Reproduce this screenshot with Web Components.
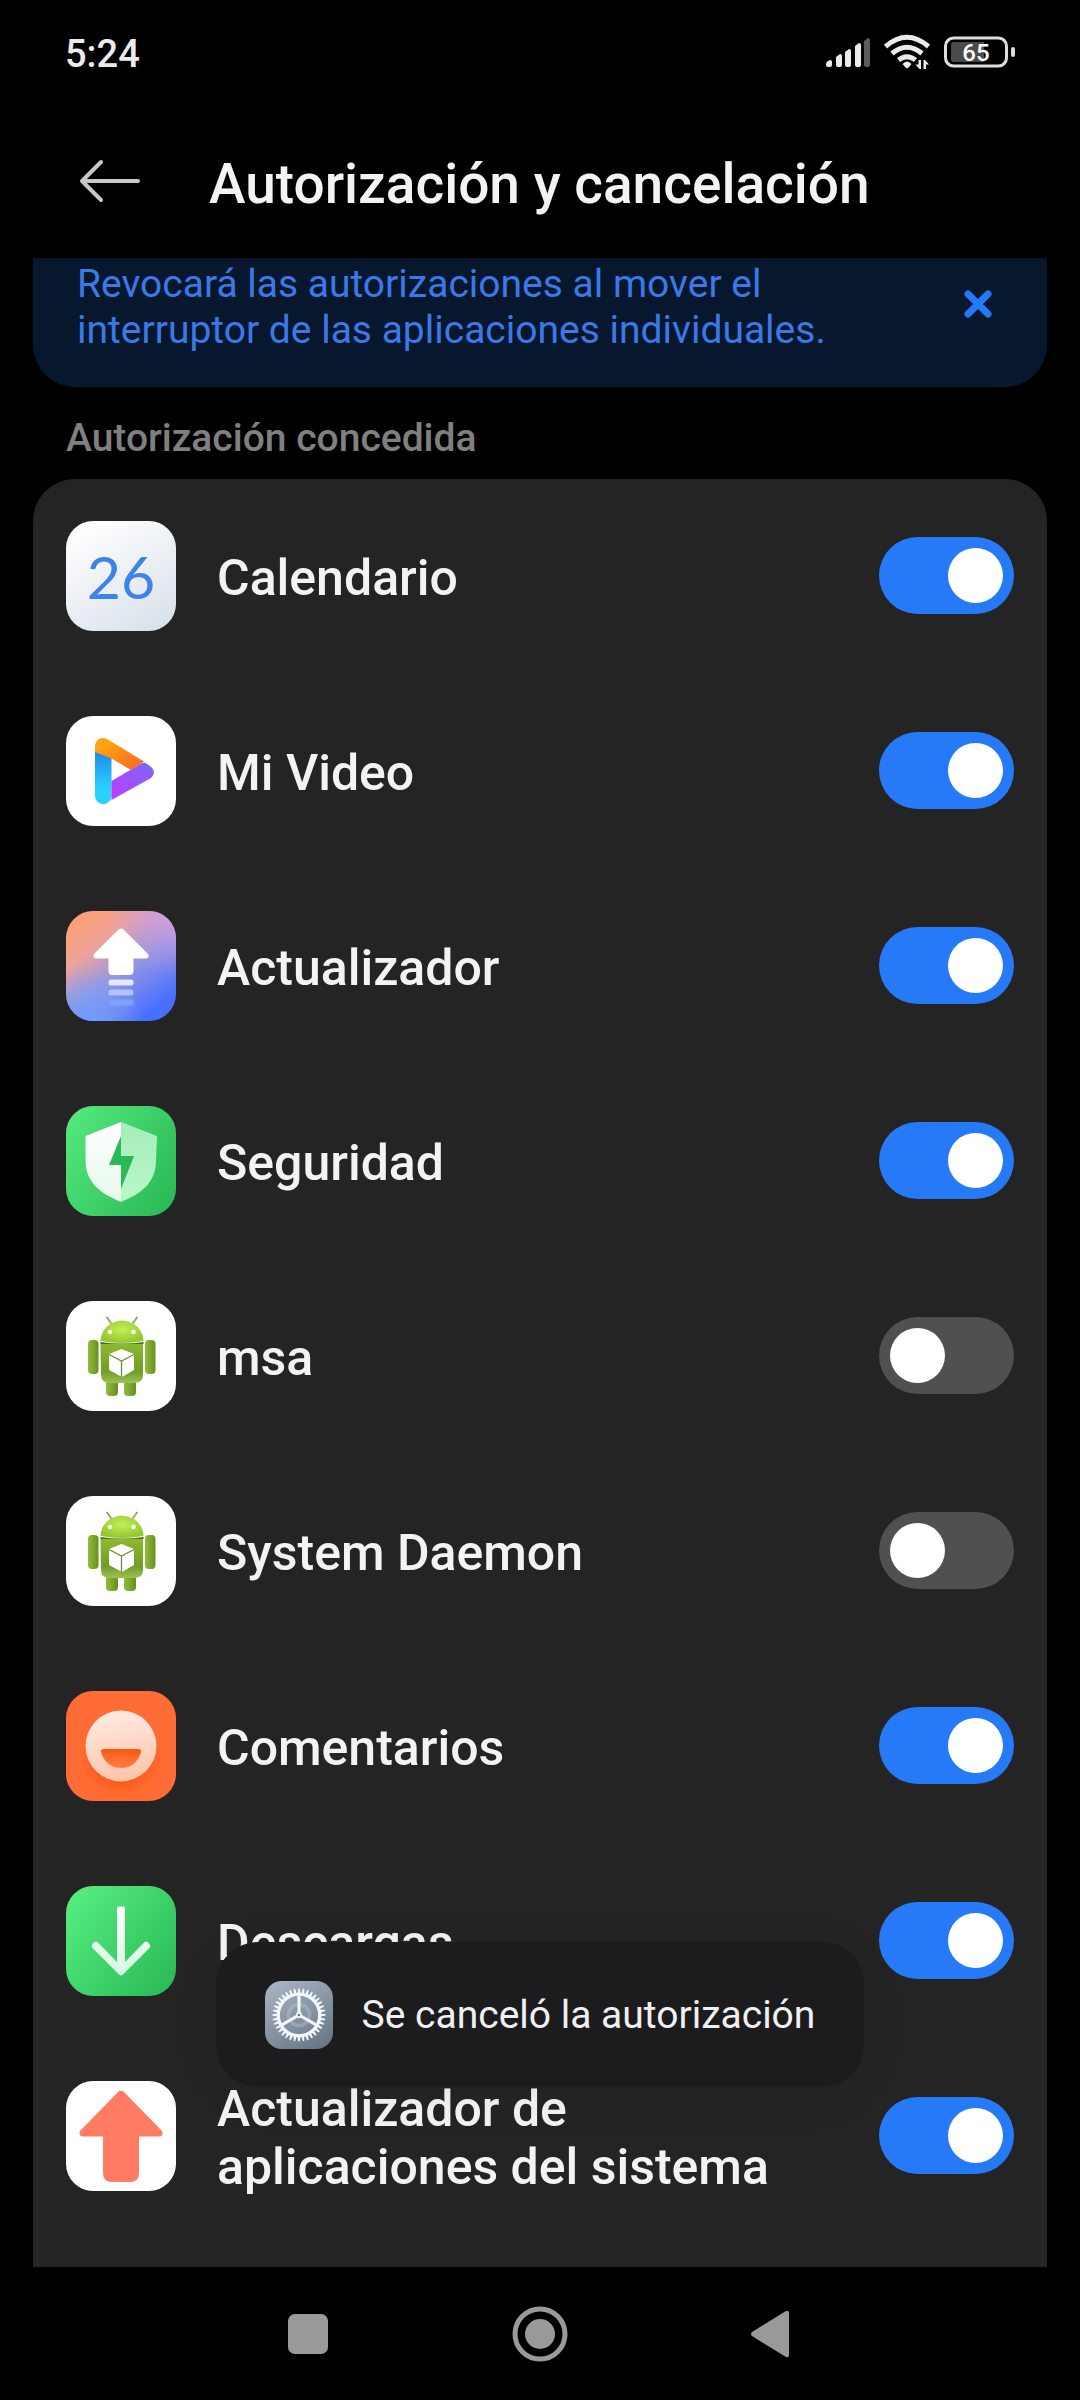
<!DOCTYPE html>
<html lang="es">
<head>
<meta charset="utf-8">
<meta name="viewport" content="width=device-width, initial-scale=1">
<title>Autorización y cancelación</title>
<style>
  html { background: #000; }
  body { margin: 0; font-family: Roboto, sans-serif; color: #f3f3f3; }
</style>
</head>
<body>
<settings-screen>
  <status-bar slot="status" time="5:24" battery="65"></status-bar>
  <title-bar slot="header">Autorización y cancelación</title-bar>
  <tip-banner>Revocará las autorizaciones al mover el interruptor de las aplicaciones individuales.</tip-banner>
  <app-group heading="Autorización concedida">
    <app-row icon="calendar" on>Calendario</app-row>
    <app-row icon="video" on>Mi Video</app-row>
    <app-row icon="updater" on>Actualizador</app-row>
    <app-row icon="security" on>Seguridad</app-row>
    <app-row icon="android">msa</app-row>
    <app-row icon="android">System Daemon</app-row>
    <app-row icon="feedback" on>Comentarios</app-row>
    <app-row icon="downloads" on>Descargas</app-row>
    <app-row icon="sysupdate" on>Actualizador de aplicaciones del sistema</app-row>
  </app-group>
  <toast-message slot="toast">Se canceló la autorización</toast-message>
  <nav-bar slot="nav"></nav-bar>
</settings-screen>

<script>
const define = (name, render) => customElements.define(name, class extends HTMLElement {
  connectedCallback() {
    if (this.shadowRoot) return;
    this.attachShadow({ mode: 'open' }).innerHTML = render(this);
  }
});

const gearTeeth = (n, cx, cy, r1, r2) => {
  let d = '';
  for (let i = 0; i < n; i++) {
    const a = (i / n) * Math.PI * 2, w = Math.PI / n;
    const p = (ang, r) => (cx + Math.sin(ang) * r).toFixed(2) + ' ' + (cy - Math.cos(ang) * r).toFixed(2);
    d += (i ? 'L' : 'M') + p(a - w * 0.7, r1) + 'L' + p(a - w * 0.3, r2) + 'L' + p(a + w * 0.3, r2) + 'L' + p(a + w * 0.7, r1);
  }
  return d + 'Z';
};

const ICONS = {
  calendar: `<defs><linearGradient id="g" x1="0.2" y1="0" x2="0.8" y2="1"><stop offset="0" stop-color="#fff"/><stop offset="1" stop-color="#d9e2ea"/></linearGradient></defs>
    <rect width="110" height="110" rx="27" fill="url(#g)"/>
    <text x="55" y="78" text-anchor="middle" font-family="Lato, sans-serif" font-size="59" fill="#3f82e8">26</text>`,
  video: `<defs><linearGradient id="o" x1="0" y1="0" x2="1" y2="1"><stop offset="0.2" stop-color="#fea312"/><stop offset="1" stop-color="#fb6422"/></linearGradient>
    <linearGradient id="b" x1="0" y1="0" x2="0" y2="1"><stop offset="0" stop-color="#1f87e8"/><stop offset="0.7" stop-color="#2bd0ff"/></linearGradient>
    <linearGradient id="p" x1="0" y1="1" x2="1" y2="0"><stop offset="0" stop-color="#c03cff"/><stop offset="1" stop-color="#7a67f8"/></linearGradient></defs>
    <rect width="110" height="110" rx="27" fill="#fff"/>
    <path d="M29 35H45.500V80A8.200 8.200 0 0 1 29 80Z" fill="url(#b)"/>
    <path d="M45.500 65L76 47Q79 46 82 48.500Q92 55 85 62L45.500 84Z" fill="url(#p)"/>
    <path d="M29 36V30Q30 22 37 22Q39 22 42 23.500L78 45.500L65 54L45.500 42.500Z" fill="url(#o)"/>`,
  updater: `<defs><linearGradient id="g" x1="0.15" y1="0" x2="0.8" y2="0.9"><stop offset="0" stop-color="#ff9f70"/><stop offset="0.3" stop-color="#eea39c"/><stop offset="0.6" stop-color="#9595e2"/><stop offset="1" stop-color="#4770ff"/></linearGradient>
    <radialGradient id="r" cx="1" cy="0" r="0.6"><stop offset="0" stop-color="#d7a0e6"/><stop offset="1" stop-color="#b49ae6" stop-opacity="0"/></radialGradient>
    <radialGradient id="l" cx="0.2" cy="1" r="0.5"><stop offset="0" stop-color="#6b9cff"/><stop offset="1" stop-color="#86a4f4" stop-opacity="0"/></radialGradient>
    <filter id="f" x="-20%" y="-60%" width="140%" height="220%"><feGaussianBlur stdDeviation="1.2"/></filter></defs>
    <rect width="110" height="110" rx="27" fill="url(#g)"/><rect width="110" height="110" rx="27" fill="url(#r)"/><rect width="110" height="110" rx="27" fill="url(#l)"/>
    <path d="M52 19Q55 16 58 19L82 43Q84 47 80 47.500H67.500V60Q67.500 64 63.500 64H46.500Q42.500 64 42.500 60V47.500H30Q26 47 28 43Z" fill="#fff"/>
    <rect x="42.500" y="68.500" width="25" height="6" rx="2.500" fill="#e3e8ff"/>
    <rect x="42.500" y="78.500" width="25" height="6" rx="2.500" fill="#b1c4ff"/>
    <rect x="42.500" y="88.500" width="25" height="6" rx="2.500" fill="#7fa3ff" filter="url(#f)"/>`,
  security: `<defs><linearGradient id="g" x1="0" y1="0.2" x2="1" y2="0.8"><stop offset="0" stop-color="#53e67b"/><stop offset="1" stop-color="#2aba57"/></linearGradient>
    <linearGradient id="w" x1="0" y1="0" x2="0" y2="1"><stop offset="0" stop-color="#fff"/><stop offset="1" stop-color="#e6f9ec"/></linearGradient>
    <linearGradient id="m" x1="0" y1="0" x2="0" y2="1"><stop offset="0" stop-color="#a6edba"/><stop offset="1" stop-color="#b9f8ca"/></linearGradient></defs>
    <rect width="110" height="110" rx="27" fill="url(#g)"/>
    <path d="M55 16L19.500 30V54C19.500 73 30 86 55 96Z" fill="url(#w)"/>
    <path d="M55 16L91 30L90 54C90 73 80 86 55 96Z" fill="url(#m)"/>
    <path d="M55 30L43 59H55V83L68 50H55Z" fill="#2bb856"/>`,
  android: `<defs><radialGradient id="h" cx="0.5" cy="0.4" r="0.6"><stop offset="0" stop-color="#c4ee55"/><stop offset="1" stop-color="#93c630"/></radialGradient>
    <linearGradient id="b" x1="0" y1="0" x2="0" y2="1"><stop offset="0" stop-color="#8db832"/><stop offset="0.7" stop-color="#6f9d26"/><stop offset="1" stop-color="#9fc055"/></linearGradient>
    <linearGradient id="a" x1="0" y1="0" x2="1" y2="0"><stop offset="0" stop-color="#93bc3a"/><stop offset="0.5" stop-color="#7da62e"/><stop offset="1" stop-color="#66901f"/></linearGradient></defs>
    <rect width="110" height="110" rx="27" fill="#fff"/>
    <path d="M41 16.500L45 22M71 16.500L67 22" stroke="#93a869" stroke-width="2" stroke-linecap="round"/>
    <rect x="22" y="39" width="10.500" height="34" rx="4" fill="url(#a)"/><rect x="79" y="39" width="10.500" height="34" rx="4" fill="url(#a)"/>
    <rect x="40" y="74" width="12" height="21" rx="4" fill="url(#a)"/><rect x="58" y="74" width="12" height="21" rx="4" fill="url(#a)"/>
    <path d="M34.500 43H77V74Q77 82 68 82H44Q35 82 35 74Z" fill="url(#b)"/>
    <path d="M34.500 40Q35 29 44 23Q56 16 68 23Q77 29 77.500 40Q56 44 34.500 40Z" fill="url(#h)"/>
    <path d="M34.500 41Q56 44 77.500 41V43H34.500Z" fill="#4f6f1c"/>
    <circle cx="44" cy="31" r="2.300" fill="#f5ffe8"/><circle cx="67.500" cy="31" r="2.300" fill="#f5ffe8"/>
    <path d="M43 53L55.500 48L68 53V69L56 76L43 69Z" fill="#fff"/>
    <path d="M43 53.500L55.500 60L68 53.500M55.500 60V76" fill="none" stroke="#6b8b34" stroke-width="1.300"/>`,
  feedback: `<defs><linearGradient id="w" x1="0.4" y1="0" x2="0.6" y2="1"><stop offset="0" stop-color="#ffeae1"/><stop offset="1" stop-color="#ffc4a8"/></linearGradient>
    <linearGradient id="m" x1="0" y1="0" x2="0" y2="1"><stop offset="0" stop-color="#fb5712"/><stop offset="1" stop-color="#ff7f49"/></linearGradient>
    <filter id="f" x="-30%" y="-30%" width="160%" height="160%"><feGaussianBlur stdDeviation="6"/></filter><clipPath id="c"><rect width="110" height="110" rx="27"/></clipPath></defs>
    <rect width="110" height="110" rx="27" fill="#ff6c35"/>
    <g clip-path="url(#c)"><circle cx="55" cy="65" r="33" fill="#fb5a14" filter="url(#f)"/></g>
    <circle cx="55" cy="55" r="35.500" fill="url(#w)"/>
    <path d="M38 58H72Q75.500 58 75 61Q70 77 55 77Q40 77 35 61Q34.500 58 38 58Z" fill="url(#m)"/>`,
  downloads: `<defs><linearGradient id="g" x1="0" y1="0.1" x2="1" y2="0.9"><stop offset="0" stop-color="#55ee80"/><stop offset="1" stop-color="#2aba57"/></linearGradient>
    <linearGradient id="w" gradientUnits="userSpaceOnUse" x1="0" y1="20" x2="0" y2="90"><stop offset="0" stop-color="#fff"/><stop offset="1" stop-color="#d2f9de"/></linearGradient></defs>
    <rect width="110" height="110" rx="27" fill="url(#g)"/>
    <path d="M51 22.500Q51 20.500 53 20.500H57Q59 20.500 59 22.500V76L78 56.500Q80 54.500 82 56.500L83.500 58Q85 60 83.500 62L57 88.500Q55 90.500 53 88.500L26.500 62Q25 60 26.500 58L28 56.500Q30 54.500 32 56.500L51 76Z" fill="url(#w)"/>`,
  sysupdate: `<rect width="110" height="110" rx="27" fill="#fff"/>
    <path d="M52 11Q55 8.500 58 11L96 50Q98 55 93 55.500H73V92Q73 101 64 101H46Q37 101 37 92V55.500H17Q12 55 14 50Z" fill="#ff7b63"/>`,
  settings: `<defs><linearGradient id="g" x1="0.2" y1="0" x2="0.8" y2="1"><stop offset="0" stop-color="#a7b2c2"/><stop offset="1" stop-color="#687785"/></linearGradient></defs>
    <rect width="110" height="110" rx="27" fill="url(#g)"/>
    <circle cx="55" cy="55" r="17" fill="none" stroke="#c3ccd6" stroke-opacity="0.35" stroke-width="6"/>
    <path fill="#f4f7fa" fill-rule="evenodd" d="${gearTeeth(36, 55, 55, 36, 43)}M55 24A31 31 0 1 0 55 86A31 31 0 1 0 55 24Z"/>
    <path d="M55 55V23M55 55L27.300 71M55 55L82.700 71" stroke="#f4f7fa" stroke-width="5"/>
    <circle cx="55" cy="55" r="5" fill="#f4f7fa"/><circle cx="55" cy="55" r="2" fill="#6f7d8b"/>`
};

define('status-bar', el => `
  <style>
    :host { display: flex; align-items: center; justify-content: space-between; height: 108px; padding: 0 65px 4px; box-sizing: border-box; }
    time { padding-top: 4px; font-size: 38px; line-height: 44px; font-weight: 500; color: #ebebeb; }
    .right { display: flex; align-items: center; gap: 13px; }
    svg { display: block; }
  </style>
  <time>${el.getAttribute('time')}</time>
  <div class="right">
    <svg width="46" height="32" viewBox="0 0 46 32" fill="#ebebeb" aria-hidden="true">
      <path d="M1 28Q1 26 3 25L5 24Q7 24 7 26V29Q7 31 5 31H3Q1 31 1 29Z"/><path d="M11 21L15 18Q17 18 17 20V29Q17 31 15 31H13Q11 31 11 29Z"/>
      <path d="M20 16L24 13Q26 13 26 15V29Q26 31 24 31H22Q20 31 20 29Z"/><path d="M30 10L34 7Q36 7 36 9V29Q36 31 34 31H32Q30 31 30 29Z"/>
      <path d="M39 5L43 2Q45 2 45 4V29Q45 31 43 31H41Q39 31 39 29Z" fill="#5c5c5c"/>
    </svg>
    <svg width="46" height="36" viewBox="0 0 46 36" fill="none" stroke="#ebebeb" stroke-width="5" aria-hidden="true">
      <path d="M1.500 12.500Q23 -6 44.500 12.500M8 19.500Q23 7 38 19.500M14.500 26Q23 19.500 31.500 26"/>
      <path d="M18.500 30Q23 25 27.500 30L24.500 33.500Q23 35 21.500 33.500Z" fill="#ebebeb" stroke="none"/>
      <path d="M37 26V35H35.500L31.500 30.500H34.500V26ZM39.500 35V26H41L45 30.500H42V35Z" fill="#ebebeb" stroke="none"/>
    </svg>
    <svg width="72" height="32" viewBox="0 0 72 32" role="img" aria-label="Batería">
      <rect x="2.500" y="2" width="61" height="28" rx="8" fill="none" stroke="#dcdcdc" stroke-width="3"/>
      <path d="M11 6H41V26H11Q8 26 8 23V9Q8 6 11 6Z" fill="#4a4a4a"/>
      <rect x="68" y="11" width="4" height="10" rx="2" fill="#dcdcdc"/>
      <text x="33" y="25" text-anchor="middle" font-family="Roboto, sans-serif" font-weight="500" font-size="24" fill="#fff">${el.getAttribute('battery')}</text>
    </svg>
  </div>`);

define('title-bar', () => `
  <style>
    :host { display: flex; align-items: center; gap: 67px; height: 150px; padding: 0 78px 4px; box-sizing: border-box; }
    button { flex: none; border: 0; background: none; padding: 0; }
    svg { display: block; }
    h1 { margin: 0; padding-top: 6px; font-size: 55px; line-height: 64px; font-weight: 500; color: #f3f3f3; }
  </style>
  <button aria-label="Atrás"><svg width="64" height="46" viewBox="0 0 64 46" fill="none" stroke="#c8c8c8" stroke-width="4" stroke-linecap="round" stroke-linejoin="round"><path d="M23 4L4 23L23 42M4 23H60"/></svg></button>
  <h1><slot></slot></h1>`);

define('tip-banner', () => `
  <style>
    :host { display: flex; align-items: center; justify-content: space-between; gap: 40px; margin: 0 33px; padding: 3px 51px 34px 44px; border-radius: 0 0 42px 42px; background: #07172e; box-sizing: border-box; }
    p { margin: 0; max-width: 800px; font-size: 39px; line-height: 46px; color: #3a79e6; }
    button { flex: none; border: 0; background: none; padding: 0 0 6px; }
    svg { display: block; }
  </style>
  <p><slot></slot></p>
  <button aria-label="Cerrar"><svg width="36" height="36" viewBox="0 0 36 36" fill="none" stroke="#277af7" stroke-width="7" stroke-linecap="round"><path d="M8 8L28 28M28 8L8 28"/></svg></button>`);

define('app-group', el => `
  <style>
    :host { display: flex; flex-direction: column; flex: 1; padding: 0 33px; }
    h2 { margin: 0; padding: 29px 33px 19px; font-size: 39px; line-height: 44px; font-weight: 500; color: #808080; }
    .card { flex: 1; background: #242424; border-radius: 42px 42px 0 0; }
  </style>
  <h2>${el.getAttribute('heading')}</h2>
  <div class="card"><slot></slot></div>`);

define('app-icon', el => `
  <style>:host { display: block; flex: none; width: 110px; height: 110px; } svg { display: block; width: 100%; height: 100%; }</style>
  <svg viewBox="0 0 110 110" aria-hidden="true">${ICONS[el.getAttribute('name')]}</svg>`);

define('app-row', el => `
  <style>
    :host { display: block; }
    label { display: flex; align-items: center; height: 195px; padding: 0 33px 1px; gap: 41px; box-sizing: border-box; }
    .name { flex: 1; padding-top: 4px; font-size: 50px; line-height: 58px; font-weight: 500; color: #f3f3f3; }
    .name span { display: block; max-width: 580px; }
    input { appearance: none; flex: none; display: flex; align-items: center; width: 135px; height: 77px; margin: 0 0 1px; padding: 0 11px; border-radius: 39px; background: #505050; box-sizing: border-box; }
    input::before { content: ""; width: 55px; height: 55px; border-radius: 50%; background: #fff; }
    input:checked { background: #277af7; justify-content: flex-end; }
  </style>
  <label>
    <app-icon name="${el.getAttribute('icon')}"></app-icon>
    <span class="name"><span><slot></slot></span></span>
    <input type="checkbox" role="switch"${el.hasAttribute('on') ? ' checked' : ''}>
  </label>`);

define('toast-message', () => `
  <style>
    :host { display: flex; align-items: center; gap: 29px; height: 145px; padding: 0 49px; border-radius: 42px; background: #1c1c1e; box-shadow: 0 8px 50px rgba(0, 0, 0, 0.06); box-sizing: border-box; font-size: 39px; line-height: 44px; color: #f0f0f2; white-space: nowrap; }
    app-icon { width: 68px; height: 68px; }
  </style>
  <app-icon name="settings"></app-icon><span role="status"><slot></slot></span>`);

define('nav-bar', () => `
  <style>
    :host { display: flex; justify-content: center; align-items: center; gap: 168px; height: 133px; background: #000; }
    button { border: 0; background: none; padding: 0; }
    svg { display: block; }
  </style>
  <button aria-label="Recientes"><svg width="64" height="64" viewBox="0 0 64 64" fill="#999"><rect x="12" y="12" width="40" height="40" rx="7"/></svg></button>
  <button aria-label="Inicio"><svg width="64" height="64" viewBox="0 0 64 64" fill="#999"><circle cx="32" cy="32" r="15"/><circle cx="32" cy="32" r="25" fill="none" stroke="#999" stroke-width="5"/></svg></button>
  <button aria-label="Volver"><svg width="64" height="64" viewBox="0 0 64 64" fill="#999"><path d="M12 34Q10 32 12 30L46 9Q49 8 49 11V53Q49 56 46 55Z"/></svg></button>`);

define('settings-screen', () => `
  <style>
    :host { display: flex; flex-direction: column; min-height: 100vh; background: #000; }
    main { flex: 1; display: flex; flex-direction: column; position: relative; }
    .toast { position: absolute; left: 0; right: 0; bottom: 180px; display: flex; justify-content: center; }
  </style>
  <slot name="status"></slot>
  <slot name="header"></slot>
  <main>
    <slot></slot>
    <div class="toast"><slot name="toast"></slot></div>
  </main>
  <slot name="nav"></slot>`);
</script>
</body>
</html>
